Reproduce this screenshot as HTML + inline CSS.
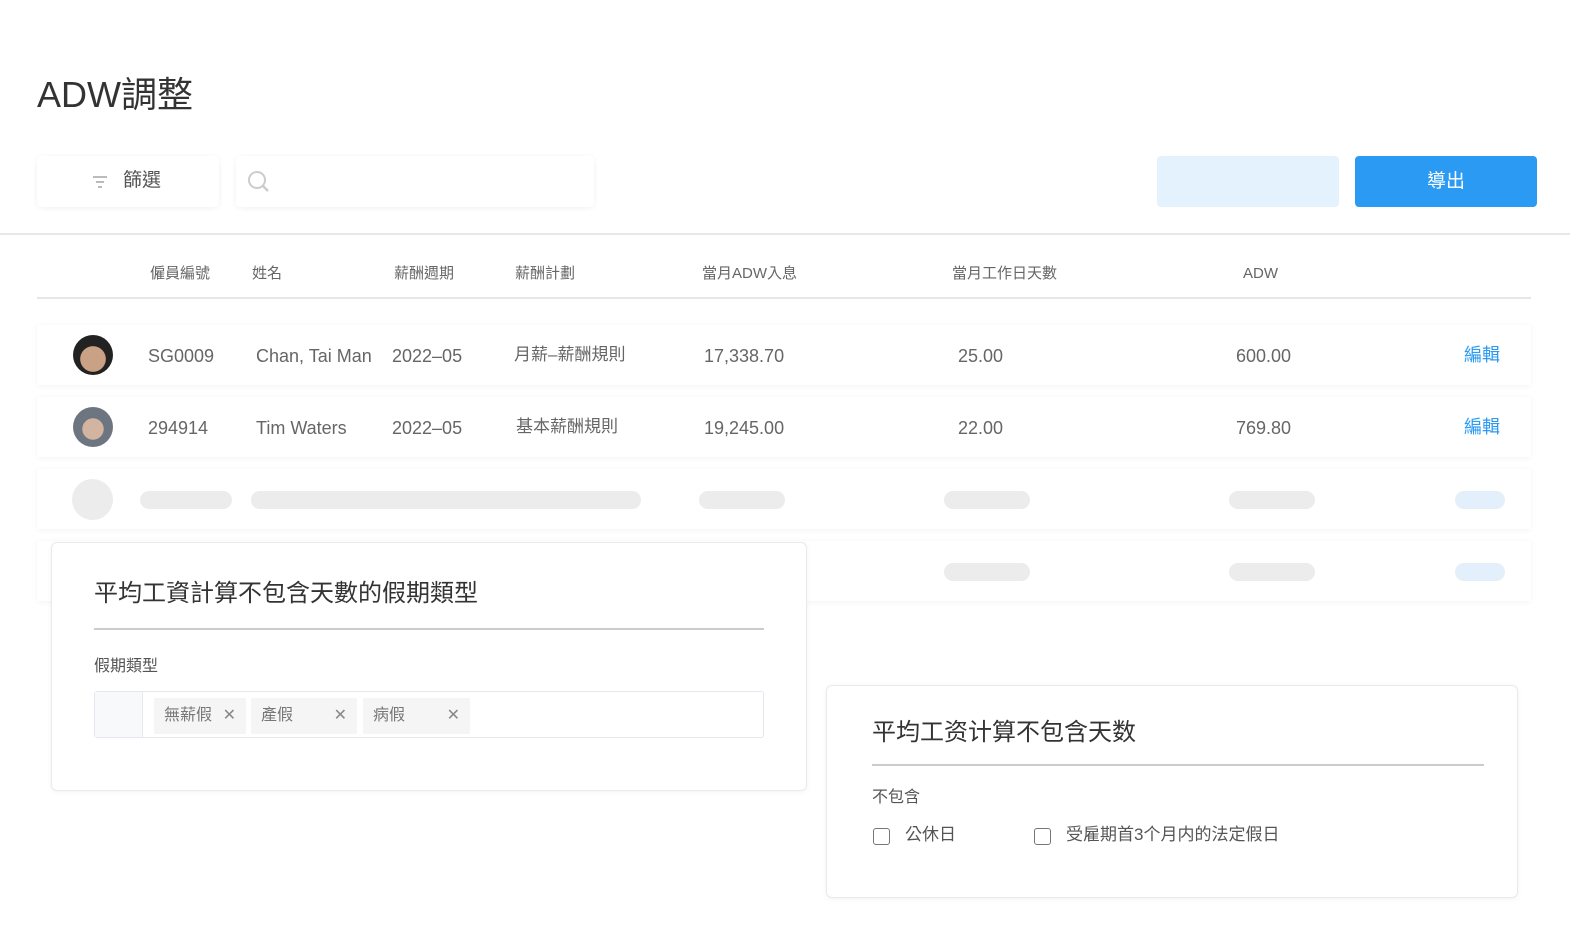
<!DOCTYPE html>
<html><head><meta charset="utf-8"><style>
*{margin:0;padding:0;box-sizing:border-box}
body{width:1570px;height:938px;background:#fff;font-family:"Liberation Sans","Noto Sans CJK TC",sans-serif;color:#555;position:relative;overflow:hidden}
.a{position:absolute}
.card{position:absolute;background:#fff;border-radius:4px;box-shadow:0 1px 6px rgba(0,0,0,.06)}
.row{position:absolute;left:37px;width:1494px;height:60px;background:#fff;box-shadow:0 1px 6px rgba(0,0,0,.05);font-size:18px;color:#666;line-height:22px}
.row span{position:absolute;top:20px}
.row span.c{top:19px;font-size:17px;line-height:22px}
.sk{position:absolute;height:18px;border-radius:9px;background:#ececec}
.skb{background:#e3f0fb}
.hd{position:absolute;top:264px;font-size:15px;color:#666;line-height:20px}
.tag{position:absolute;top:6px;height:36px;background:#f5f5f5;font-size:16px;color:#777;line-height:36px;padding-left:10px}
.tag i{position:absolute;right:10px;font-style:normal;color:#888}
.cb{position:absolute;width:17px;height:17px;border:1.5px solid #777;border-radius:3px}
</style></head><body>
<div class="a" style="left:37px;top:74px;font-size:36px;color:#333;line-height:42px">ADW調整</div>
<div class="card" style="left:37px;top:156px;width:182px;height:51px">
<svg class="a" style="left:55px;top:19px" width="16" height="14"><path d="M1 2h14M4 7h8M6 12h4" stroke="#bbb" stroke-width="2"/></svg>
<span class="a" style="left:86px;top:13px;font-size:19px;color:#555;line-height:24px">篩選</span></div>
<div class="card" style="left:236px;top:156px;width:358px;height:51px">
<svg class="a" style="left:11px;top:14px" width="24" height="24"><circle cx="10" cy="10" r="8" stroke="#ccc" stroke-width="2" fill="none"/><path d="M16 16l5 5" stroke="#ccc" stroke-width="2.5"/></svg></div>
<div class="a" style="left:1157px;top:156px;width:182px;height:51px;background:#e3f2fd;border-radius:4px"></div>
<div class="a" style="left:1355px;top:156px;width:182px;height:51px;background:#2a9af3;border-radius:4px;color:#fff;font-size:19px;text-align:center;line-height:51px">導出</div>
<div class="a" style="left:0;top:233px;width:1570px;height:2px;background:#e8e8e8"></div>
<div class="hd" style="left:150px">僱員編號</div><div class="hd" style="left:252px">姓名</div><div class="hd" style="left:394px">薪酬週期</div><div class="hd" style="left:515px">薪酬計劃</div><div class="hd" style="left:702px">當月ADW入息</div><div class="hd" style="left:952px">當月工作日天數</div><div class="hd" style="left:1243px">ADW</div>
<div class="a" style="left:37px;top:297px;width:1494px;height:2px;background:#e6e6e6"></div>
<div class="row" style="top:325px"><div class="a" style="left:36px;top:10px;width:40px;height:40px;border-radius:50%;background:radial-gradient(circle at 50% 60%,#c9a185 40%,#222 42%)"></div><span style="left:111px">SG0009</span><span style="left:219px">Chan, Tai Man</span><span style="left:355px">2022–05</span><span class="c" style="left:477px">月薪–薪酬規則</span><span style="left:667px">17,338.70</span><span style="left:921px">25.00</span><span style="left:1199px">600.00</span><span class="c" style="left:1427px;color:#2a9af3;font-size:18px">編輯</span></div>
<div class="row" style="top:397px"><div class="a" style="left:36px;top:10px;width:40px;height:40px;border-radius:50%;background:radial-gradient(circle at 50% 55%,#d2b4a0 35%,#6c7580 37%)"></div><span style="left:111px">294914</span><span style="left:219px">Tim Waters</span><span style="left:355px">2022–05</span><span class="c" style="left:479px">基本薪酬規則</span><span style="left:667px">19,245.00</span><span style="left:921px">22.00</span><span style="left:1199px">769.80</span><span class="c" style="left:1427px;color:#2a9af3;font-size:18px">編輯</span></div>
<div class="row" style="top:469px"><div class="a" style="left:35px;top:10px;width:41px;height:41px;border-radius:50%;background:#ececec"></div><div class="sk" style="left:103px;top:22px;width:92px"></div><div class="sk" style="left:214px;top:22px;width:390px"></div><div class="sk" style="left:662px;top:22px;width:86px"></div><div class="sk" style="left:907px;top:22px;width:86px"></div><div class="sk" style="left:1192px;top:22px;width:86px"></div><div class="sk skb" style="left:1418px;top:22px;width:50px"></div></div>
<div class="row" style="top:541px"><div class="sk" style="left:907px;top:22px;width:86px"></div><div class="sk" style="left:1192px;top:22px;width:86px"></div><div class="sk skb" style="left:1418px;top:22px;width:50px"></div></div>
<div class="a" style="left:51px;top:542px;width:756px;height:249px;background:#fff;border:1px solid #e6ebf0;border-radius:6px;box-shadow:0 1px 6px rgba(0,0,0,.05)">
<div class="a" style="left:42px;top:36px;font-size:24px;color:#333;line-height:30px">平均工資計算不包含天數的假期類型</div>
<div class="a" style="left:42px;top:85px;width:670px;height:2px;background:#ccc"></div>
<div class="a" style="left:42px;top:114px;font-size:16px;color:#555;line-height:20px">假期類型</div>
<div class="a" style="left:42px;top:148px;width:670px;height:47px;border:1px solid #e4e9ef;border-radius:3px">
<div class="a" style="left:0;top:0;width:48px;height:45px;background:#f7f9fb;border-right:1px solid #e4e9ef"></div>
<div class="tag" style="left:59px;width:92px">無薪假<i>✕</i></div>
<div class="tag" style="left:156px;width:106px">產假<i>✕</i></div>
<div class="tag" style="left:268px;width:107px">病假<i>✕</i></div>
</div></div>
<div class="a" style="left:826px;top:685px;width:692px;height:213px;background:#fff;border:1px solid #e6ebf0;border-radius:6px;box-shadow:0 1px 6px rgba(0,0,0,.05)">
<div class="a" style="left:45px;top:32px;font-size:24px;color:#333;line-height:30px">平均工资计算不包含天数</div>
<div class="a" style="left:45px;top:78px;width:612px;height:2px;background:#ccc"></div>
<div class="a" style="left:45px;top:102px;font-size:16px;color:#555;line-height:20px">不包含</div>
<div class="cb" style="left:46px;top:142px"></div><div class="a" style="left:78px;top:138px;font-size:17px;color:#555;line-height:22px">公休日</div>
<div class="cb" style="left:207px;top:142px"></div><div class="a" style="left:239px;top:138px;font-size:17px;color:#555;line-height:22px">受雇期首3个月内的法定假日</div>
</div>
</body></html>
